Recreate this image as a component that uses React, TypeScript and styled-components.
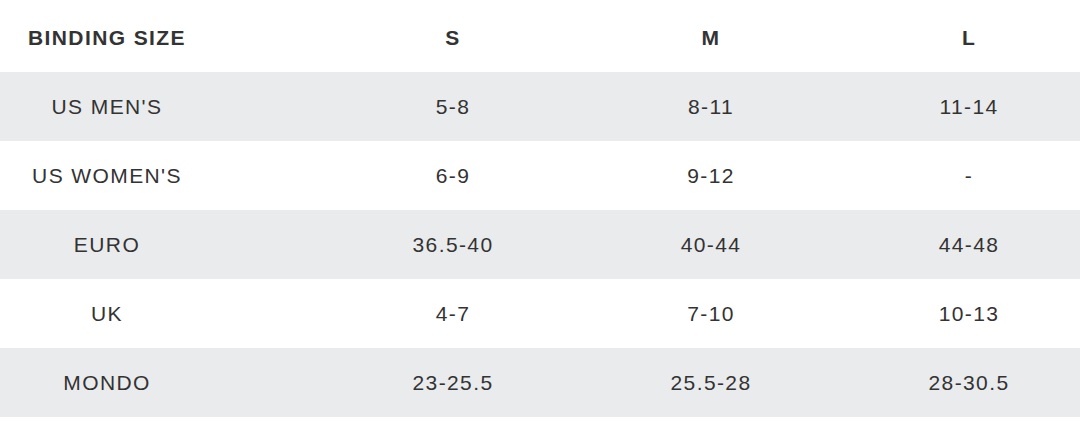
import styled, { createGlobalStyle } from "styled-components";

const GlobalStyle = createGlobalStyle`
   html, body {
      margin: 0;
      padding: 0;
      background: #ffffff;
   }
   body {
      font-family: "Liberation Sans", Arial, Helvetica, sans-serif;
      color: #333333;
   }
`;

const Table = styled.div`
   display: grid;
   grid-template-columns: 324px 258px 258px 1fr;
   width: 1080px;
`;

const Row = styled.div<{ $shaded?: boolean; $head?: boolean }>`
   display: contents;
   & > div {
      background: ${(p) => (p.$shaded ? "#eaebed" : "#ffffff")};
      height: ${(p) => (p.$head ? "72px" : "69px")};
      padding-top: ${(p) => (p.$head ? "4px" : "0")};
      font-weight: ${(p) => (p.$head ? 700 : 400)};
   }
`;

const Cell = styled.div<{ $first?: boolean; $last?: boolean }>`
   display: flex;
   align-items: center;
   justify-content: center;
   font-size: 21px;
   letter-spacing: 1.4px;
   color: #333333;
   white-space: nowrap;
   padding-right: ${(p) => (p.$first ? "110px" : "0")};
   padding-left: ${(p) => (p.$last ? "18px" : "0")};
   box-sizing: border-box;
`;

const rows = [
   ["US MEN'S", "5-8", "8-11", "11-14"],
   ["US WOMEN'S", "6-9", "9-12", "-"],
   ["EURO", "36.5-40", "40-44", "44-48"],
   ["UK", "4-7", "7-10", "10-13"],
   ["MONDO", "23-25.5", "25.5-28", "28-30.5"],
];

const App = () => {
   return (
      <>
         <GlobalStyle />
         <Table>
            <Row $head>
               <Cell $first>BINDING SIZE</Cell>
               <Cell>S</Cell>
               <Cell>M</Cell>
               <Cell $last>L</Cell>
            </Row>
            {rows.map((r, i) => (
               <Row key={r[0]} $shaded={i % 2 === 0}>
                  {r.map((v, j) => (
                     <Cell key={j} $first={j === 0} $last={j === 3}>
                        {v}
                     </Cell>
                  ))}
               </Row>
            ))}
         </Table>
      </>
   );
};

export default App;
